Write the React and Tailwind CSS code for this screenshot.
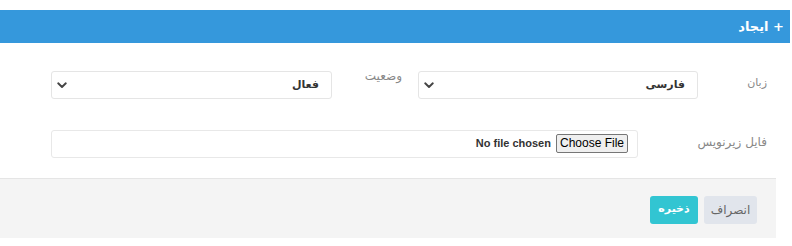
import React from "react";

const fa = { fontFamily: '"DejaVu Sans", "Liberation Sans", sans-serif' };

function Chevron() {
  return (
    <svg width="10" height="7" viewBox="0 0 10 7" className="shrink-0">
      <path d="M1.2 1.3 L5 5 L8.8 1.3" fill="none" stroke="#444" strokeWidth="1.9" strokeLinecap="round" strokeLinejoin="round" />
    </svg>
  );
}

function Select({ value, width }) {
  return (
    <div className={`${width} h-[28px] border border-[#e5e5e5] rounded-[3px] bg-white flex items-center justify-between pr-[12px] pl-[5px]`}>
      <span className="text-[11px] font-bold text-[#333]" style={fa}>{value}</span>
      <Chevron />
    </div>
  );
}

export default function App() {
  return (
    <div dir="rtl" className="w-[792px] h-[246px] bg-white pt-[10px] overflow-hidden" style={fa}>
      <div className="w-[790px] mr-auto h-[33px] bg-[#3598dc] flex items-center pr-[6px]">
        <span className="text-white text-[13px] font-bold">+ ایجاد</span>
      </div>
      <div className="w-[776px] mr-auto">
        <div className="pt-[28px] flex">
          <div className="w-[78px] pr-[9px] pt-[4px] text-[11px] text-[#888]">زبان</div>
          <Select value="فارسی" width="w-[280px]" />
          <div className="w-[86px] pr-[16px] text-[12px] text-[#888] -mt-[4px]">وضعیت</div>
          <Select value="فعال" width="w-[281px]" />
        </div>
        <div className="pt-[31px] flex">
          <div className="w-[138px] pr-[9px] pt-[3px] text-[12px] text-[#888]">فایل زیرنویس</div>
          <div className="w-[587px] h-[28px] border border-[#e8e8e8] rounded-[3px] bg-white flex items-center pr-[9px] pb-[2px]">
            <span
              className="h-[19px] px-[3px] border border-[#767676] bg-[#efefef] rounded-[2px] text-[12px] text-black flex items-center"
              style={{ fontFamily: '"Liberation Sans", Arial, sans-serif' }}
            >
              Choose File
            </span>
            <span
              className="mr-[5px] text-[11px] font-bold text-[#333]"
              style={{ fontFamily: '"Liberation Sans", Arial, sans-serif' }}
            >
              No file chosen
            </span>
          </div>
        </div>
        <div className="mt-[20px] h-[60px] bg-[#f4f4f4] border-t border-[#e5e5e5] flex items-center pr-[19px] gap-[6px] pt-[2px]">
          <button className="h-[28px] w-[53px] rounded-[3px] bg-[#e1e5ec] text-[#666] text-[12px]" style={fa}>انصراف</button>
          <button className="h-[28px] w-[48px] rounded-[3px] bg-[#32c5d2] text-white text-[11px] font-bold" style={fa}>ذخیره</button>
        </div>
      </div>
    </div>
  );
}
